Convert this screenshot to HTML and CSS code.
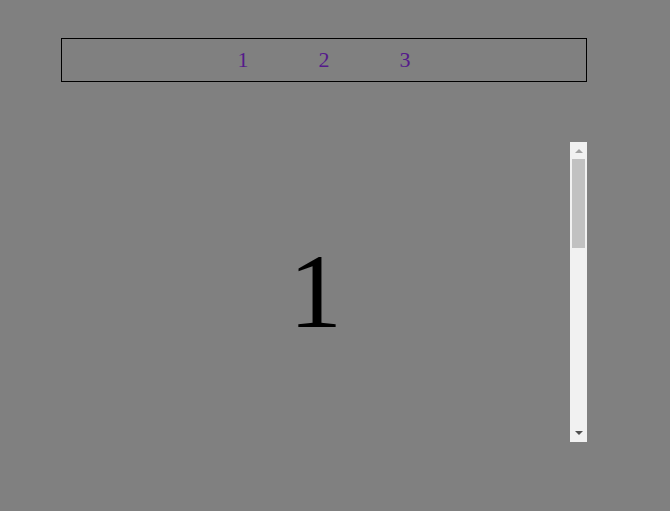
FILE: index.html
```html
<!DOCTYPE html>
<html>
<head>
<meta charset="utf-8">
<link rel="stylesheet" href="styles.css">
</head>
<body>
<nav class="nav">
  <a class="nav-link" href="#s1">1</a>
  <a class="nav-link" href="#s2">2</a>
  <a class="nav-link" href="#s3">3</a>
</nav>
<div class="slider-frame">
  <div class="slider">
    <section class="slide" id="s1">1</section>
    <section class="slide" id="s2">2</section>
    <section class="slide" id="s3">3</section>
  </div>
  <div class="scrollbar" aria-hidden="true">
    <div class="sb-btn sb-up"><span class="arrow arrow-up"></span></div>
    <div class="sb-track"><div class="sb-thumb"></div></div>
    <div class="sb-btn sb-down"><span class="arrow arrow-down"></span></div>
  </div>
</div>
</body>
</html>
```
FILE: styles.css
```css
html, body {
  margin: 0;
  padding: 0;
  background: #808080;
}
body {
  font-family: "Liberation Serif", "Times New Roman", serif;
  width: 670px;
  height: 511px;
  overflow: hidden;
}
.nav {
  box-sizing: border-box;
  width: 526px;
  height: 44px;
  margin: 38px 0 0 61px;
  border: 1px solid #000;
  display: flex;
  justify-content: center;
  align-items: center;
  gap: 70px;
}
.nav-link {
  font-size: 22px;
  color: #551a8b;
  text-decoration: none;
}
.slider-frame {
  display: flex;
  width: 526px;
  height: 300px;
  margin: 60px 0 0 61px;
}
.slider {
  flex: 1;
  height: 300px;
  overflow-y: scroll;
  scrollbar-width: none;
}
.slider::-webkit-scrollbar {
  display: none;
}
.slide {
  height: 300px;
  display: flex;
  justify-content: center;
  align-items: center;
  font-size: 106px;
  color: #000;
}
.scrollbar {
  width: 17px;
  height: 300px;
  background: #f1f1f1;
  display: flex;
  flex-direction: column;
}
.sb-btn {
  height: 17px;
  display: flex;
  justify-content: center;
  align-items: center;
}
.sb-track {
  flex: 1;
  padding: 0 2px;
}
.sb-thumb {
  height: 89px;
  background: #c1c1c1;
}
.arrow {
  width: 0;
  height: 0;
  border-left: 4px solid transparent;
  border-right: 4px solid transparent;
}
.arrow-up {
  border-bottom: 4px solid #a3a3a3;
  margin-top: 1px;
}
.arrow-down {
  border-top: 4px solid #505050;
  margin-bottom: 1px;
}
```
